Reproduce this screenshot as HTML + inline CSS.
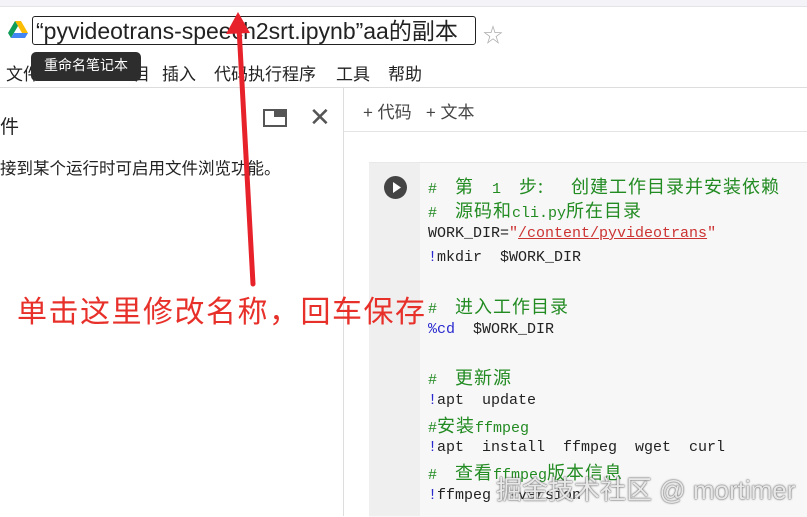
<!DOCTYPE html>
<html><head><meta charset="utf-8"><style>
body{margin:0;width:807px;height:516px;overflow:hidden;background:#fff;font-family:"Liberation Sans","Noto Sans CJK SC",sans-serif;position:relative}
.a{position:absolute;white-space:nowrap}
.code{font-family:"Liberation Mono","Noto Sans CJK SC",monospace;font-size:15px;line-height:20px;height:20px;color:#222;left:428px;white-space:pre}
.c{font-family:"Noto Sans CJK SC",sans-serif;font-size:18px;letter-spacing:1px;line-height:20px}
.g{color:#228b22}.b{color:#2a2ad0}
.m{position:absolute;top:60px;font-size:17px;color:#222;white-space:nowrap}
</style></head><body>
<div class="a" style="left:0;top:0;width:807px;height:6px;background:#f3f3f8;border-bottom:1px solid #e4e4e8"></div>
<svg class="a" style="left:8px;top:21px" width="20" height="18" viewBox="0 0 20 18"><path d="M7 0h6l7 12h-6z" fill="#fbbc04"/><path d="M7 0L0 12l3 5 7-12z" fill="#0f9d58"/><path d="M3 17h14l3-5H6z" fill="#4285f4"/></svg>
<div class="a" style="left:32px;top:16px;width:442px;height:27px;border:1.5px solid #222;border-radius:3px"></div>
<div class="a" style="left:36px;top:17px;font-size:23px;color:#222;line-height:29px">“pyvideotrans-speech2srt.ipynb”aa的副本</div>
<div class="a" style="left:483px;top:19px;font-size:20px;color:#aaa">☆</div>
<div class="m" style="left:6px">文件</div>
<div class="m" style="left:133px">目</div>
<div class="m" style="left:162px">插入</div>
<div class="m" style="left:214px">代码执行程序</div>
<div class="m" style="left:336px">工具</div>
<div class="m" style="left:388px">帮助</div>
<div class="a" style="left:31px;top:52px;width:110px;height:29px;background:#2d2d2d;border-radius:5px;color:#fff;font-size:14px;line-height:27px;text-align:center">重命名笔记本</div>
<div class="a" style="left:0;top:87px;width:807px;border-top:1px solid #ddd"></div>
<div class="a" style="left:343px;top:87px;height:429px;border-left:1px solid #ddd"></div>
<div class="a" style="left:344px;top:131px;width:463px;border-top:1px solid #e4e4e4"></div>
<div class="a" style="left:0;top:112px;font-size:19px;color:#222">件</div>
<div class="a" style="left:263px;top:109px;width:24px;height:18px;border:2.5px solid #555;box-sizing:border-box"></div>
<div class="a" style="left:274px;top:109px;width:13px;height:8px;background:#555"></div>
<div class="a" style="left:309px;top:102px;font-size:26px;color:#555">✕</div>
<div class="a" style="left:363px;top:98px;font-size:17px;color:#444">+ 代码 &nbsp; + 文本</div>
<div class="a" style="left:0;top:155px;font-size:16.5px;color:#222">接到某个运行时可启用文件浏览功能。</div>
<div class="a" style="left:369px;top:162px;width:438px;height:354px;background:#f7f7f7;border-top:1px solid #e8e8e8"></div>
<div class="a" style="left:369px;top:163px;width:51px;height:353px;background:#efefef"></div>
<div class="a" style="left:384px;top:176px;width:23px;height:23px;border-radius:50%;background:#444"></div>
<svg class="a" style="left:384px;top:176px" width="23" height="23"><path d="M9 6l8 5.5-8 5.5z" fill="#fff"/></svg>
<div class="a code g" style="top:176px">#  <span class="c">第</span>  1  <span class="c">步:</span>   <span class="c">创建工作目录并安装依赖</span></div>
<div class="a code g" style="top:200px">#  <span class="c">源码和</span>cli.py<span class="c">所在目录</span></div>
<div class="a code" style="top:224px">WORK_DIR=<span style="color:#c33">"<u>/content/pyvideotrans</u>"</span></div>
<div class="a code" style="top:248px"><span class="b">!</span>mkdir  $WORK_DIR</div>
<div class="a code g" style="top:296px">#  <span class="c">进入工作目录</span></div>
<div class="a code" style="top:320px"><span class="b">%cd</span>  $WORK_DIR</div>
<div class="a code g" style="top:367px">#  <span class="c">更新源</span></div>
<div class="a code" style="top:391px"><span class="b">!</span>apt  update</div>
<div class="a code g" style="top:415px">#<span class="c">安装</span>ffmpeg</div>
<div class="a code" style="top:438px"><span class="b">!</span>apt  install  ffmpeg  wget  curl</div>
<div class="a code g" style="top:462px">#  <span class="c">查看</span>ffmpeg<span class="c">版本信息</span></div>
<div class="a code" style="top:486px"><span class="b">!</span>ffmpeg  -version</div>
<div class="a" style="left:496px;top:470px;font-size:26px;color:rgba(255,255,255,.85);text-shadow:0 0 2px #666,0 0 1px #444">掘金技术社区 @ mortimer</div>
<svg class="a" style="left:0;top:0" width="807" height="516"><path d="M253 284L239 28" stroke="#e8222a" stroke-width="5" stroke-linecap="round"/><path d="M238 12L226 34L250 33z" fill="#e8222a"/></svg>
<div class="a" style="left:17px;top:287px;font-size:30px;color:#e8302a;letter-spacing:1.5px">单击这里修改名称，回车保存</div>
</body></html>
